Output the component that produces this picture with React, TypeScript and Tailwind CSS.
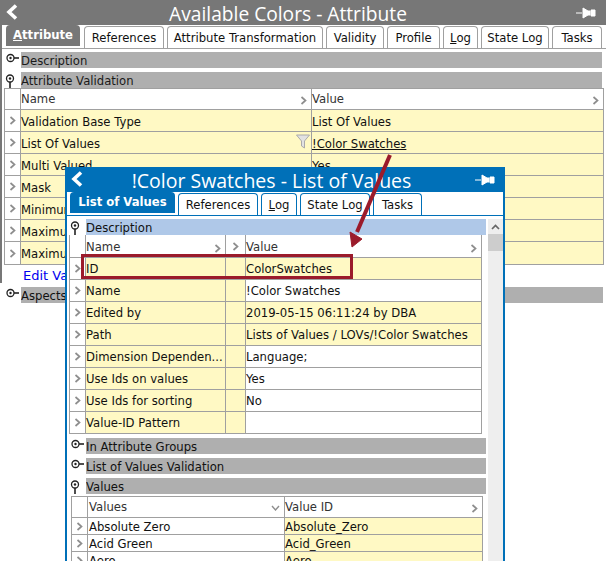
const FONT = "font-['DejaVu_Sans',sans-serif]";

function Chevron({ className = "" }: { className?: string }) {
  return (
    <svg width="7" height="9" viewBox="0 0 7 9" className={className}>
      <path d="M1.5 1 L5.5 4.5 L1.5 8" fill="none" stroke="#8e8e8e" strokeWidth="1.7" />
    </svg>
  );
}

function BackArrow() {
  return (
    <svg width="13" height="16" viewBox="0 0 13 16">
      <path d="M10 1.5 L3 8 L10 14.5" fill="none" stroke="#fff" strokeWidth="3.6" />
    </svg>
  );
}

function Pin() {
  return (
    <svg width="20" height="12" viewBox="0 0 20 12">
      <path d="M0 6 H6 M7 1 L7 11 L12 8 H14 V4 H12 L7 1 Z M15 3 H19 V9 H15 Z" fill="#fff" stroke="#fff" strokeWidth="1" />
    </svg>
  );
}

function SectionKey({ open }: { open: boolean }) {
  return open ? (
    <svg width="10" height="15" viewBox="0 0 10 15">
      <circle cx="5" cy="4.5" r="3.5" fill="#fff" stroke="#222" strokeWidth="1.3" />
      <circle cx="5" cy="4.5" r="1.2" fill="#222" />
      <path d="M5 8 V14" stroke="#222" strokeWidth="1.6" />
    </svg>
  ) : (
    <svg width="13" height="10" viewBox="0 0 13 10">
      <circle cx="4.5" cy="5" r="3.5" fill="#fff" stroke="#222" strokeWidth="1.3" />
      <circle cx="4.5" cy="5" r="1.2" fill="#222" />
      <path d="M8 5 H13" stroke="#222" strokeWidth="1.6" />
    </svg>
  );
}

function Section({ label, open, bar = "bg-[#afafaf]" }: { label: string; open?: boolean; bar?: string }) {
  return (
    <div className="flex h-4 items-start">
      <div className={`flex w-[19px] shrink-0 ${open ? "pl-[3px] pt-0.5" : "pl-[4px] pt-px"}`}>
        <SectionKey open={!!open} />
      </div>
      <div className={`h-4 flex-1 truncate leading-[18px] ${bar}`}>{label}</div>
    </div>
  );
}

const backTabs = [
  { label: "References", w: "w-[80px]" },
  { label: "Attribute Transformation", w: "w-[156px]" },
  { label: "Validity", w: "w-[58px]" },
  { label: "Profile", w: "w-[53px]" },
  { label: "Log", w: "w-[35px]", u: true },
  { label: "State Log", w: "w-[68px]" },
  { label: "Tasks", w: "w-[50px]" },
];

const backRows = [
  ["Validation Base Type", "List Of Values"],
  ["List Of Values", "!Color Swatches"],
  ["Multi Valued", "Yes"],
  ["Mask", ""],
  ["Minimum Value", ""],
  ["Maximum Value", ""],
  ["Maximum Length", ""],
];

function BackWindow() {
  return (
    <div className="h-[304px]">
      <div className="h-[283px] border-l-2 border-[#777]">
        <div className="relative -ml-0.5 flex h-[25px] items-center justify-center bg-[#777] pr-[30px] pt-[3px] text-[19.2px] text-white">
          <div className="absolute left-1.5 top-1"><BackArrow /></div>
          <span className="font-['Open_Sans',sans-serif]">Available Colors - Attribute</span>
          <div className="absolute right-[10px] top-[7px]"><Pin /></div>
        </div>
        <div className="flex h-6 items-end gap-[3px] border-b border-[#a0a0a0] pl-1 pr-[2px]">
          <div className="mb-0.5 mr-px flex h-[21px] w-[74px] items-center justify-center rounded-t bg-[#777] font-bold text-white">
            <span><span className="underline">A</span>ttribute</span>
          </div>
          {backTabs.map((t) => (
            <div key={t.label} className={`flex h-[22px] items-center justify-center rounded-t border border-b-0 border-[#a0a0a0] pt-0.5 ${t.w}`}>
              {t.u ? <span><span className="underline">L</span>og</span> : t.label}
            </div>
          ))}
        </div>
        <div className="flex flex-col gap-1 pr-[4px] pt-[3px] text-[#1a1a1a]">
          <Section label="Description" />
          <Section label="Attribute Validation" open />
        </div>
        <div className="ml-0.5 mr-[2px] border-x border-b border-[#a0a0a0]">
          <div className="flex h-[22px] border-y border-[#a0a0a0] bg-white">
            <div className="w-4 shrink-0 border-r border-[#a0a0a0]" />
            <div className="flex w-[291px] items-center justify-between border-r border-[#a0a0a0] pr-1 pt-0.5 text-[#333]">
              Name <Chevron />
            </div>
            <div className="flex flex-1 items-center justify-between pr-1 pt-0.5 text-[#333]">
              Value <Chevron />
            </div>
          </div>
          {backRows.map(([n, v]) => (
            <div key={n} className="flex h-[22px] border-b border-[#a0a0a0] bg-[#fff9c4] last:border-b-0">
              <div className="flex w-4 shrink-0 items-center justify-center border-r border-[#a0a0a0] bg-white"><Chevron /></div>
              <div className="relative flex w-[291px] items-center border-r border-[#a0a0a0] pt-1">
                {n}
                {n === "List Of Values" && (
                  <svg width="14" height="15" viewBox="0 0 14 15" className="absolute right-[1px] top-[2px]">
                    <path d="M0.5 1 H13.5 L8.5 7 V14 L5.5 12 V7 Z" fill="#e2e2e2" stroke="#aaa" />
                  </svg>
                )}
              </div>
              <div className="flex flex-1 items-center pt-1">
                {v === "!Color Swatches" ? <span className="underline">{v}</span> : v}
              </div>
            </div>
          ))}
        </div>
        <div className="h-[21px] pl-[21px] pt-px text-[13px] leading-5 text-[#0000ee]">Edit Values</div>
      </div>
      <div className="mt-[4px] pl-0.5 pr-[3px]">
        <Section label="Aspects" />
      </div>
    </div>
  );
}

const frontTabs = [
  { label: "References", w: "w-[80px]" },
  { label: "Log", w: "w-[36px]", u: true },
  { label: "State Log", w: "w-[70px]" },
  { label: "Tasks", w: "w-[49px]" },
];

const frontRows = [
  { n: "ID", v: "ColorSwatches", y: true },
  { n: "Name", v: "!Color Swatches", y: false },
  { n: "Edited by", v: "2019-05-15 06:11:24 by DBA", y: true },
  { n: "Path", v: "Lists of Values / LOVs/!Color Swatches", y: true },
  { n: "Dimension Dependen...", v: "Language;", y: false },
  { n: "Use Ids on values", v: "Yes", y: false },
  { n: "Use Ids for sorting", v: "No", y: false },
  { n: "Value-ID Pattern", v: "", y: false },
];

const valueRows = [
  ["Absolute Zero", "Absolute_Zero"],
  ["Acid Green", "Acid_Green"],
  ["Aero", "Aero"],
];

function FrontWindow() {
  return (
    <div className="absolute left-[65px] top-[167px] h-[394px] w-[440px] overflow-hidden border-x-2 border-[#0070b8] bg-white">
      <div className="relative -mx-0.5 flex h-[25px] items-center justify-center bg-[#0070b8] pr-[27px] pt-[3px] text-[19.5px] text-white">
        <div className="absolute left-1.5 top-1"><BackArrow /></div>
        <span className="font-['Open_Sans',sans-serif]">!Color Swatches - List of Values</span>
        <div className="absolute right-[10px] top-[7px]"><Pin /></div>
      </div>
      <div className="flex h-6 items-end gap-[3px] border-b border-[#0070b8] pl-[3px] pr-[2px]">
        <div className="mb-0.5 flex h-[21px] w-[105px] items-center justify-center rounded-t bg-[#0070b8] font-bold text-white">
          List of Values
        </div>
        {frontTabs.map((t) => (
          <div key={t.label} className={`flex h-[22px] items-center justify-center rounded-t border border-b-0 border-[#0070b8] pt-0.5 ${t.w}`}>
            {t.u ? <span><span className="underline">L</span>og</span> : t.label}
          </div>
        ))}
      </div>
      <div className="flex h-[369px] pt-[3px]">
        <div className="w-[419px] shrink-0">
          <Section label="Description" open bar="bg-[#afc8e8]" />
          <div className="ml-0.5 mr-[4px] border-x border-b border-[#a0a0a0]">
            <div className="flex h-[22px] bg-white text-[#333]">
              <div className="w-4 shrink-0 border-r border-[#a0a0a0]" />
              <div className="flex w-[140px] items-center justify-between border-r border-[#a0a0a0] pr-1 pt-1">Name <Chevron /></div>
              <div className="flex w-[20px] items-center justify-center border-r border-[#a0a0a0]"><Chevron /></div>
              <div className="flex flex-1 items-center justify-between pr-1 pt-1">Value <Chevron /></div>
            </div>
            {frontRows.map((r) => (
              <div key={r.n} className="flex h-[22px] border-t border-[#a0a0a0]">
                <div className="flex w-4 shrink-0 items-center justify-center border-r border-[#a0a0a0]"><Chevron /></div>
                <div className="flex w-[140px] items-center border-r border-[#a0a0a0] bg-[#fff9c4] pt-0.5">{r.n}</div>
                <div className="w-[20px] border-r border-[#a0a0a0] bg-[#fff9c4]" />
                <div className={`flex flex-1 items-center pt-0.5 ${r.y ? "bg-[#fff9c4]" : ""}`}>{r.v}</div>
              </div>
            ))}
          </div>
          <div className="flex flex-col gap-1 pt-1">
            <Section label="In Attribute Groups" />
            <Section label="List of Values Validation" />
            <Section label="Values" open />
          </div>
          <div className="ml-1 mr-[3px] mt-[2px] border-x border-[#a0a0a0]">
            <div className="flex h-[22px] border-y border-[#a0a0a0] text-[#333]">
              <div className="w-4 shrink-0 border-r border-[#a0a0a0]" />
              <div className="flex w-[197px] items-center justify-between border-r border-[#a0a0a0] pl-px pr-1 pt-0.5">
                Values
                <svg width="9" height="6" viewBox="0 0 9 6"><path d="M1 1 L4.5 5 L8 1" fill="none" stroke="#8e8e8e" strokeWidth="1.4" /></svg>
              </div>
              <div className="flex flex-1 items-center justify-between pr-1 pt-0.5">Value ID <Chevron /></div>
            </div>
            {valueRows.map(([n, v]) => (
              <div key={n} className="flex h-[17px] border-b border-[#a0a0a0] leading-[14px]">
                <div className="flex w-4 shrink-0 items-center justify-center border-r border-[#a0a0a0]"><Chevron /></div>
                <div className="w-[197px] border-r border-[#a0a0a0] pl-px pt-[2px]">{n}</div>
                <div className="flex-1 bg-[#fff9c4] pt-[2px]">{v}</div>
              </div>
            ))}
          </div>
        </div>
        <div className="ml-[2px] flex h-full w-[15px] flex-col items-center bg-[#eeeeee]">
          <svg width="9" height="6" viewBox="0 0 9 6" className="mt-[5px]"><path d="M1 5 L4.5 1.5 L8 5" fill="none" stroke="#666" strokeWidth="1.7" /></svg>
          <div className="mt-[4px] h-[17px] w-full bg-[#cdcdcd]" />
        </div>
      </div>
    </div>
  );
}

export default function App() {
  return (
    <div className={`relative h-[561px] w-[606px] overflow-hidden bg-white text-[11.65px] text-[#111] ${FONT}`}>
      <BackWindow />
      <FrontWindow />
      {/* callout drawn on top of both windows */}
      <div className="pointer-events-none absolute left-[81px] top-[254px] h-[25px] w-[272px] border-[3px] border-[#9b1b2b]" />
      <svg width="606" height="561" className="pointer-events-none absolute left-0 top-0">
        <path d="M390 155 L357 232" stroke="#9b1b2b" strokeWidth="4" fill="none" />
        <path d="M352 247 L350 232 L362 239 Z" fill="#9b1b2b" stroke="#9b1b2b" strokeWidth="1" />
      </svg>
    </div>
  );
}
